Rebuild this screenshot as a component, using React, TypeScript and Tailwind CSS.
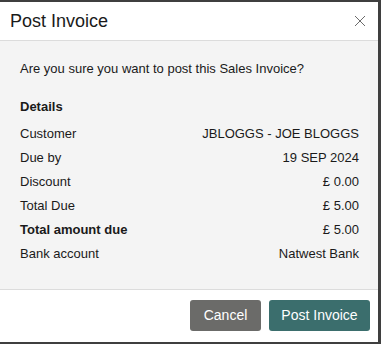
const rows = [
    { label: "Customer", value: "JBLOGGS - JOE BLOGGS" },
    { label: "Due by", value: "19 SEP 2024" },
    { label: "Discount", value: "£ 0.00" },
    { label: "Total Due", value: "£ 5.00" },
    { label: "Total amount due", value: "£ 5.00", bold: true },
    { label: "Bank account", value: "Natwest Bank" },
];

export default function App() {
    return (
        <div className="w-[381px] h-[344px] bg-[#3f3f3f] pt-[2px] font-['Liberation_Sans',Arial,sans-serif] text-[#1a1a1a]">
            <div className="w-[378px] h-[340px] bg-white flex flex-col">
                {/* header */}
                <div className="h-[39px] flex items-center justify-between pl-[10px] pr-[12px] border-b border-[#dcdcdc]">
                    <h1 className="text-[18px] leading-none">Post Invoice</h1>
                    <svg width="12" height="12" viewBox="0 0 12 12" className="text-[#6b6b6b]">
                        <path d="M1 1L11 11M11 1L1 11" stroke="currentColor" strokeWidth="1" />
                    </svg>
                </div>

                {/* body */}
                <div className="h-[249px] bg-[#f4f4f4] border-b border-[#dcdcdc] pl-[20px] pr-[19px] pt-[20px] text-[13px]">
                    <p className="leading-[16px] mb-[22px]">Are you sure you want to post this Sales Invoice?</p>
                    <p className="font-bold leading-[16px] mb-[11px]">Details</p>
                    <div className="flex flex-col gap-[8px]">
                        {rows.map((r, i) => (
                            <div key={i} className={"flex justify-between leading-[16px] " + (r.bold ? "font-bold" : "")}>
                                <span>{r.label}</span>
                                <span className="font-normal">{r.value}</span>
                            </div>
                        ))}
                    </div>
                </div>

                {/* footer */}
                <div className="flex-1 flex items-start justify-end gap-[8px] pt-[10px] pr-[8px]">
                    <button className="h-[31px] w-[71px] rounded-[3px] bg-[#6b6b69] text-white text-[14px]">Cancel</button>
                    <button className="h-[31px] w-[101px] rounded-[3px] bg-[#3b6e6d] text-white text-[14px]">Post Invoice</button>
                </div>
            </div>
        </div>
    );
}
